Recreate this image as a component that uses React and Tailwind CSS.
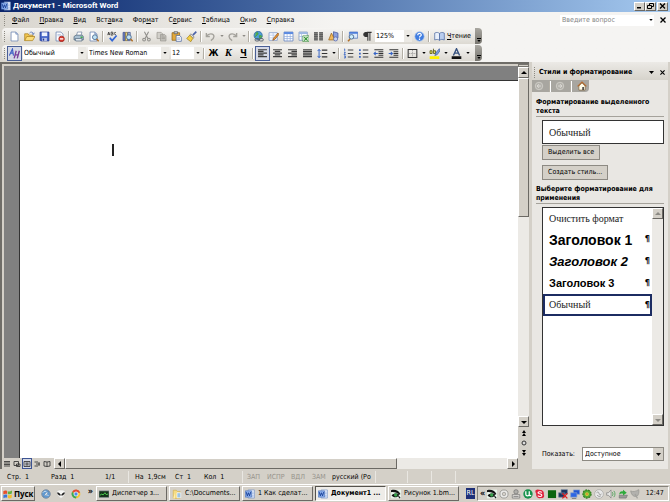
import React from "react";

/* ---------- shared drawing helpers ---------- */

function Svg({ children, className = "size-3" }) {
  return (
    <svg viewBox="0 0 16 16" className={"shrink-0 " + className} fill="none" aria-hidden="true">
      {children}
    </svg>
  );
}

function Down({ className = "w-[5px] h-[3px]" }) {
  return (
    <svg viewBox="0 0 5 3" className={"shrink-0 " + className} aria-hidden="true">
      <path d="M0 0h5L2.500 3z" fill="currentColor" />
    </svg>
  );
}

function Arrow({ dir, muted }) {
  const d = {
    up: "M1 5h6L4 2z",
    down: "M1 3h6L4 6z",
    left: "M5 1v6L2 4z",
    right: "M3 1v6l3-3z",
  }[dir];
  return (
    <svg viewBox="0 0 8 8" className="size-2 shrink-0" aria-hidden="true">
      <path d={d} fill={muted ? "#8c8a84" : "#000"} />
    </svg>
  );
}

/* ---------- toolbar icons ---------- */

const page = <path d="M3 1.500h7l3 3v10H3z" fill="#fff" stroke="#5a76a8" />;
const pageFold = <path d="M10 1.500v3h3" stroke="#5a76a8" fill="#cfdcf2" />;
const lens = (
  <>
    <circle cx="10" cy="9" r="3.500" fill="#bfe3f5" stroke="#4a6a92" strokeWidth="1.300" />
    <path d="M12.500 11.500l3 3.500" stroke="#b0702a" strokeWidth="2.200" />
  </>
);

const icons = {
  blank: <>{page}{pageFold}</>,
  open: (
    <>
      <path d="M1 14V4h5l1 2h6v3" fill="#f2c64e" stroke="#a87d1d" />
      <path d="M1 14l3-6h12l-3.500 6z" fill="#fbdc78" stroke="#a87d1d" />
      <path d="M8 3c2-2.500 5-1.500 5.500 1M15 2.500L13.700 5 11.500 3.800" stroke="#3a5fae" />
    </>
  ),
  save: (
    <>
      <path d="M1.500 1.500h13v13h-12l-1-1z" fill="#4464c8" stroke="#23358c" />
      <path d="M4 2h8v5.500H4z" fill="#eef3ff" />
      <path d="M4.500 10h7v4.500h-7z" fill="#b9c4e8" />
      <path d="M5.500 11h2v3h-2z" fill="#23358c" />
    </>
  ),
  permission: (
    <>
      {page}
      <path d="M5 5h5M5 7h6" stroke="#9fb2d6" />
      <circle cx="11" cy="11.500" r="4" fill="#d8372c" stroke="#9c1c14" />
      <path d="M8.500 11.500h5" stroke="#fff" strokeWidth="2" />
    </>
  ),
  print: (
    <>
      <path d="M5 7l1.500-5.500H13L11.500 7z" fill="#fff" stroke="#6c7f9c" />
      <path d="M1.500 8l3-2h9l1.500 2v5h-13.500z" fill="#a9c0d2" stroke="#4a6178" />
      <path d="M3 11h10v3.500H4z" fill="#e8eef2" stroke="#4a6178" />
      <path d="M11 9h3" stroke="#36a83c" strokeWidth="2" />
    </>
  ),
  preview: <>{page}{pageFold}{lens}</>,
  spell: (
    <>
      <path d="M1 6l1.500-4.500L4 6M1.500 4.500h2M6 1.500V6h1.500c2 0 2-2.500 0-2.500M6 1.500h1.500c1.500 0 1.500 2 0 2M13 2.500c-3-2-3.500 3.500 0 3" stroke="#1b1b1b" />
      <path d="M4 10l3.500 4L14 6.500" stroke="#3467d6" strokeWidth="2.400" />
    </>
  ),
  research: (
    <>
      <path d="M1.500 2h3v12h-3z" fill="#6e83c4" stroke="#3a4a84" />
      <path d="M5 2h3v12H5z" fill="#e8d27c" stroke="#7a6a30" />
      <path d="M8.500 2h3.500v12H8.500z" fill="#a5b6e0" stroke="#3a4a84" />
      {lens}
    </>
  ),
  cut: (
    <>
      <path d="M5 1l5 10M11 1L6 11" stroke="#8f8e8a" strokeWidth="1.500" />
      <circle cx="4.500" cy="12.500" r="2" stroke="#8f8e8a" strokeWidth="1.500" />
      <circle cx="11.500" cy="12.500" r="2" stroke="#8f8e8a" strokeWidth="1.500" />
    </>
  ),
  copy: (
    <>
      <path d="M1.500 2h6l2 2v7h-8z" fill="#d2d0ca" stroke="#97958f" />
      <path d="M6.500 5h6l2 2v7.500h-8z" fill="#c2c0ba" stroke="#97958f" />
      <path d="M8 9h5M8 11h5M8 7h3" stroke="#97958f" />
    </>
  ),
  paste: (
    <>
      <path d="M1.500 2.500h11v11h-11z" fill="#e3a93c" stroke="#8a5e14" />
      <path d="M4.500 1h5v3h-5z" fill="#c8ccd4" stroke="#555" />
      <path d="M7.500 6.500h5l2.500 2.500v6H7.500z" fill="#fff" stroke="#3f5d9c" />
      <path d="M9 10h4M9 12h4" stroke="#6f8fce" />
    </>
  ),
  brush: (
    <>
      <path d="M15 1l-5 5" stroke="#4a62a8" strokeWidth="2.400" />
      <path d="M7 4l5 5-2 1.500-4.500-4.500z" fill="#dfe3ea" stroke="#777" />
      <path d="M5.500 6L1 11l6 4.500 3-5z" fill="#f4cf45" stroke="#a07c16" />
    </>
  ),
  undo: <path d="M2 3v5h5M2.500 7.500C5 3 13 3 13 8c0 3-2 4.500-4.500 6" stroke="#a4a29c" strokeWidth="2" />,
  redo: <path d="M14 3v5H9M13.500 7.500C11 3 3 3 3 8c0 3 2 4.500 4.500 6" stroke="#a4a29c" strokeWidth="2" />,
  link: (
    <>
      <circle cx="7.500" cy="6.500" r="6" fill="#4d9ed8" stroke="#2a6296" />
      <path d="M4 3c3-2 4 0 3 2s-4 2-4 4M9 7c2-1 4 0 4 1l-3 3z" fill="#58b04a" stroke="#3f9440" />
      <rect x="3" y="11" width="6" height="3.500" rx="1.700" stroke="#56606e" strokeWidth="1.400" />
      <rect x="9" y="11" width="6" height="3.500" rx="1.700" stroke="#56606e" strokeWidth="1.400" />
    </>
  ),
  tablePen: (
    <>
      <path d="M1.500 2.500h12v11h-12z" fill="#fff" stroke="#6f8cc4" />
      <path d="M1.500 6h12M1.500 10h12M7.500 2.500v11" stroke="#a9bde4" />
      <path d="M14.500 3L8 10.500 7 13.500l3-1.500L16 5z" fill="#eb9a3a" stroke="#8a4c12" />
    </>
  ),
  table: (
    <>
      <path d="M1.500 1.500h13v13h-13z" fill="#fff" stroke="#4d72b8" />
      <path d="M1.500 1.500h13v3h-13z" fill="#5b8ae0" />
      <path d="M1.500 8h13M1.500 11h13M6 4v10.500M10.500 4v10.500" stroke="#8fabdd" />
    </>
  ),
  excel: (
    <>
      <path d="M1.500 1.500h12v12h-12z" fill="#fff" stroke="#6a86b8" />
      <path d="M1.500 1.500h12v3h-12z" fill="#9db8e2" />
      <path d="M1.500 8h6M5 4v9" stroke="#9db8e2" />
      <path d="M7 7h9v8.500H7z" fill="#eaf6e8" stroke="#3d8a3d" />
      <path d="M9 9l5 5M14 9l-5 5" stroke="#2f9132" strokeWidth="1.700" />
    </>
  ),
  columns: (
    <>
      <path d="M1.500 2h5.500v12H1.500zM9 2h5.500v12H9z" fill="#8c8c8a" />
      <path d="M1.500 2.500h5.500M1.500 5.500h5.500M1.500 8.500h5.500M1.500 11.500h5.500M9 2.500h5.500M9 5.500h5.500M9 8.500h5.500M9 11.500h5.500" stroke="#4d4d4d" strokeWidth="1.500" />
    </>
  ),
  drawing: (
    <>
      <path d="M8 1l6.500 2v7L8 12z" fill="#8c9fdc" stroke="#3c4f96" />
      <path d="M1 13L5 3l5 10z" fill="#f2b95a" stroke="#96621a" />
      <circle cx="11" cy="11.500" r="3" fill="#c8d2f0" stroke="#4a5ea8" />
    </>
  ),
  docmap: (
    <>
      <path d="M3.500 1.500h12v9h-12z" fill="#dceafa" stroke="#3f68b4" />
      <path d="M3.500 1.500h12v2.500h-12z" fill="#4a7ad8" />
      <circle cx="6.500" cy="8.500" r="3.300" fill="#cdeefb" stroke="#4a6a92" strokeWidth="1.300" />
      <path d="M4.500 11.500l-3 3.500" stroke="#b0702a" strokeWidth="2.200" />
    </>
  ),
  pilcrow: <path d="M7 2h7M8.500 2v12M11.500 2v12M7.500 2C1 2 1 8 7.500 8z" stroke="#333" strokeWidth="1.500" fill="#333" />,
  help: (
    <>
      <circle cx="8" cy="8" r="6.800" fill="#3f7ce0" stroke="#a9c4ec" />
      <path d="M5.500 6c0-3.500 5.500-3 5 0-.3 1.500-2.500 1.500-2.500 3.500M8 11v2" stroke="#fff" strokeWidth="1.800" />
    </>
  ),
  book: (
    <>
      <path d="M1 3c3-1.500 5-1 7 .5v10C6 12 4 12 1 13z" fill="#e9f0fb" stroke="#45629c" />
      <path d="M15 3c-3-1.500-5-1-7 .5v10c2-1.500 4-1.500 7-.5z" fill="#b9cdee" stroke="#45629c" />
    </>
  ),
  styles: (
    <>
      <path d="M.500 11L5 1.500 6.500 11M2.500 7.500h4" stroke="#3f5fc4" strokeWidth="1.700" />
      <path d="M7.500 15L10.500 4M12 15l3-11M8.500 10h5" stroke="#7a3f9a" strokeWidth="2" />
    </>
  ),
  left: <path d="M1.500 2.500h13M1.500 5h8M1.500 7.500h13M1.500 10h8M1.500 12.500h13" stroke="#3c3c3c" strokeWidth="1.700" />,
  center: <path d="M1.500 2.500h13M4 5h8M1.500 7.500h13M4 10h8M1.500 12.500h13" stroke="#3c3c3c" strokeWidth="1.700" />,
  right: <path d="M1.500 2.500h13M6.500 5h8M1.500 7.500h13M6.500 10h8M1.500 12.500h13" stroke="#3c3c3c" strokeWidth="1.700" />,
  justify: <path d="M1.500 2.500h13M1.500 5h13M1.500 7.500h13M1.500 10h13M1.500 12.500h13" stroke="#3c3c3c" strokeWidth="1.700" />,
  spacing: (
    <>
      <path d="M7 3h8M7 8h8M7 13h8" stroke="#333" strokeWidth="1.700" />
      <path d="M3 2v12M.800 4.500L3 2l2.200 2.500M.800 11.500L3 14l2.200-2.500" stroke="#3563c4" strokeWidth="1.400" />
    </>
  ),
  numbers: (
    <>
      <path d="M7 3h8M7 8h8M7 13h8" stroke="#444" strokeWidth="1.500" />
      <path d="M1.500 2l1-.7V5M1.500 6.500h2L1.500 9.500h2.500M1.500 11.500h2v3h-2M2 13h1.500" stroke="#3563c4" strokeWidth="1.200" />
    </>
  ),
  bullets: (
    <>
      <path d="M7 3h8M7 8h8M7 13h8" stroke="#444" strokeWidth="1.500" />
      <path d="M1.500 1.800h2.500v2.500H1.500zM1.500 6.800h2.500v2.500H1.500zM1.500 11.800h2.500v2.500H1.500z" fill="#3563c4" />
    </>
  ),
  outdent: (
    <>
      <path d="M2 2.500h13M8 5.500h7M8 8h7M8 10.500h7M2 13.500h13" stroke="#333" strokeWidth="1.700" />
      <path d="M7 8H1.500M4 5.500L1.500 8 4 10.500" stroke="#3563c4" strokeWidth="1.500" />
    </>
  ),
  indent: (
    <>
      <path d="M2 2.500h13M8 5.500h7M8 8h7M8 10.500h7M2 13.500h13" stroke="#333" strokeWidth="1.700" />
      <path d="M1 8h5.500M4 5.500L6.500 8 4 10.500" stroke="#3563c4" strokeWidth="1.500" />
    </>
  ),
  borders: (
    <>
      <path d="M1.700 2.200h12.600v11.600H1.700z" stroke="#333" strokeWidth="1.500" />
      <path d="M8 3v10M3 8h10" stroke="#888" strokeDasharray="1.500 1" />
    </>
  ),
  highlight: (
    <>
      <path d="M1 12h14v4H1z" fill="#fff200" />
      <path d="M1.500 4h3v4h-3zM6.500 1v7h3V4h-3" stroke="#5a5a14" strokeWidth="1.200" fill="#e8e060" />
      <path d="M15 1l-5 6-1.500 4L12 9.500 16 4z" fill="#7da0dc" stroke="#3c5894" />
    </>
  ),
  fontColor: (
    <>
      <path d="M3.500 11L8 1l4.500 10M5 7.500h6" stroke="#35507e" strokeWidth="2" />
      <path d="M1 12h14v4H1z" fill="#111" />
    </>
  ),
  word: (
    <>
      <path d="M5 1.500h10v13H5z" fill="#f4f8ff" stroke="#6c8ac0" />
      <path d="M11 5h3M11 7.500h3M11 10h3M11 12.500h3" stroke="#7c9cd8" />
      <path d="M.500 3h10v10H.500z" fill="#8fb2ee" stroke="#3f68b4" />
      <path d="M2 5l1.700 6 1.800-5L7.300 11 9 5" stroke="#173f96" strokeWidth="1.500" />
    </>
  ),
  home: (
    <>
      <path d="M3 8v6.500h10V8L8 3z" fill="#fffbe8" stroke="#7a5c30" />
      <path d="M1 8.500L8 1.500l7 7" stroke="#b4682a" strokeWidth="1.800" />
      <path d="M8.500 9.500h2.500v5H8.500z" fill="#3c3c3c" />
    </>
  ),
  back: (
    <>
      <circle cx="8" cy="8" r="6" fill="#b4b2ac" stroke="#dddbd6" />
      <path d="M11 8H5M8 5L5 8l3 3" stroke="#dddbd6" strokeWidth="1.600" />
    </>
  ),
  forward: (
    <>
      <circle cx="8" cy="8" r="6" fill="#b4b2ac" stroke="#dddbd6" />
      <path d="M5 8h6M8 5l3 3-3 3" stroke="#dddbd6" strokeWidth="1.600" />
    </>
  ),
  windows: (
    <g transform="rotate(-6 8 8)">
      <path d="M1 3c2.500-1.500 4-1 6 0l-.5 5c-2-1-3.500-1-6 0z" fill="#e8502c" />
      <path d="M8 3.500c2 1 4 1 7-.5l-.8 5c-2.500 1-4.500 1-6.500 0z" fill="#62b13c" />
      <path d="M.500 9c2.500-1 4-1 6 0L6 14c-2-1-4-1-6 0z" fill="#3b74d8" />
      <path d="M7.500 9.500c2 1 4 1 6.500 0l-.8 5c-2.500 1-4 1-6 0z" fill="#f5c02e" />
    </g>
  ),
  globe: (
    <>
      <circle cx="8" cy="8" r="6.800" fill="#5f9ad4" stroke="#7e8c9c" strokeWidth="1.500" />
      <path d="M3 6c2-3 5-3 6-1s-3 2-2 4 4-1 5 2" stroke="#cfe2f4" strokeWidth="1.400" />
      <path d="M12 4L7 7l-2.500 5L9.500 9z" fill="#f1f6fb" stroke="#46688c" strokeWidth=".700" />
    </>
  ),
  alien: (
    <>
      <path d="M1.500 3C3 2 5 1.500 8 1.500s5 .5 6.500 1.500c1 4-3 11-6.500 12C4.500 14 .500 7 1.500 3z" fill="#f6f6f4" stroke="#c8c6c0" />
      <path d="M2.500 6c2 0 4 1.500 4.500 4C4.500 10 3 8.500 2.500 6zM13.500 6c-2 0-4 1.500-4.500 4 2.500 0 4-1.500 4.500-4z" fill="#161616" stroke="#161616" />
    </>
  ),
  chrome: (
    <>
      <circle cx="8" cy="8" r="7" fill="#f6c634" />
      <path d="M8 8L1.900 4.500A7 7 0 0114.800 6H8z" fill="#df4a37" />
      <path d="M1.900 4.500A7 7 0 007.500 15L10.500 9.500 6 9z" fill="#3aa757" />
      <circle cx="8" cy="8" r="3.300" fill="#4a8af0" stroke="#fff" strokeWidth="1.200" />
    </>
  ),
  taskman: (
    <>
      <path d="M0 3h16v10.500H0z" fill="#14341a" stroke="#8a9098" />
      <path d="M1.500 10l3-2 2 1.500 3-3.500 2 3 3-1" stroke="#53dd55" strokeWidth="1.400" />
    </>
  ),
  folder: (
    <>
      <path d="M2 2h5l1.500 2H13v11H2z" fill="#f5dc83" stroke="#d0ad4c" />
      <path d="M8 6h6v8H8z" fill="#9cc4e4" stroke="#fff" />
      <path d="M2 15L4.500 6v9z" fill="#fff2ba" />
    </>
  ),
  irfan: (
    <>
      <path d="M0 1h16v14H0z" fill="#e8f4ea" />
      <path d="M0 2c6-2 12 0 15 6l-1.500 1C10.500 6 6 4.500 0 5zM1 10c3-3 9-4 12-1-2 5-9 6-12 1z" fill="#111" />
      <circle cx="7.500" cy="9.500" r="2.800" fill="#36a04a" />
      <path d="M12 11.500l2.500 3" stroke="#111" strokeWidth="1.800" />
    </>
  ),
  disc: (
    <>
      <circle cx="8" cy="8" r="6.500" fill="#ececea" stroke="#9c9c98" strokeWidth="1.500" />
      <circle cx="8" cy="8" r="2.800" fill="#d4d0c8" stroke="#8c8c88" />
    </>
  ),
  device: (
    <>
      <circle cx="8" cy="4.500" r="3.500" fill="#b0afab" stroke="#666" />
      <path d="M2 9h12v5.500H2z" fill="#dcdad6" stroke="#666" />
      <path d="M4 12h8" stroke="#666" />
    </>
  ),
  utorrent: (
    <>
      <circle cx="8" cy="8" r="7.500" fill="#17924c" />
      <path d="M4.500 3.500v5c0 3.500 5.500 3.500 5.500 0v-5V9c0 2 1.500 2 3 1" stroke="#fff" strokeWidth="2" />
    </>
  ),
  skype: (
    <>
      <path d="M1 2c3-2 5-.5 8-.5 4 0 6 4 5 7 2 4-1 7-4 6-5 1-9-2-8-7-1-1.500-2-4-1-5.500z" fill="#e0223c" />
      <path d="M11 5.500c-2-2-6.500-1-6 1 .5 1.500 6 1 6 3.500s-5 2.500-6.500.5" stroke="#fff" strokeWidth="1.700" />
    </>
  ),
  square: <path d="M1.500 2h13v12.500h-13z" fill="#0b650f" />,
  netOff: (
    <>
      <path d="M5 1h10v7H5zM1 6h10v7H1z" fill="#19345e" stroke="#6d7f98" />
      <path d="M7 7l8 8M15 7l-8 8" stroke="#e21f1f" strokeWidth="2.200" />
    </>
  ),
  net: (
    <>
      <path d="M5.500 1.500h10v7h-10z" fill="#2257d2" stroke="#8ba3cc" />
      <path d="M1 6h10v7H1z" fill="#2d66e4" stroke="#8ba3cc" />
      <path d="M3 15h7" stroke="#777" strokeWidth="1.500" />
    </>
  ),
  flower: (
    <>
      <circle cx="8" cy="8" r="6.500" fill="#52a836" stroke="#357f22" strokeWidth="2" strokeDasharray="3 1.500" />
      <circle cx="8" cy="8" r="3" fill="#d2d83c" />
      <circle cx="8" cy="8" r="1.300" fill="#d8542c" />
    </>
  ),
  grayDisc: (
    <>
      <circle cx="8" cy="8" r="7" fill="#e8e8e8" stroke="#a2a2a0" />
      <path d="M4 6c2-2 4-1 4 1s2 3 4 1M5 10l3 2 3-1" stroke="#8e8e8c" strokeWidth="1.300" />
    </>
  ),
  speaker: (
    <>
      <path d="M1 6h3l4-4.500v13L4 10H1z" fill="#e8e8e6" stroke="#777" />
      <path d="M10 5c1.500 2 1.500 4 0 6M12.500 3c2.500 3 2.500 7 0 10" stroke="#4fa35a" strokeWidth="1.400" />
    </>
  ),
  eject: (
    <>
      <path d="M2 10h13l-2 4.500H2z" fill="#9a9a98" stroke="#70706e" />
      <path d="M2 9c0-4 3-6 6-5V1l6 5-6 4.500V7.500C6 7 4 7 2 9z" fill="#2faa3c" />
    </>
  ),
  shield: (
    <>
      <path d="M1 3c4 2 8 1 13-2 1 6-1 11-5 11S2 9 1 3z" fill="#b2b1ad" stroke="#90908c" />
      <path d="M8 8l4 7" stroke="#a2a19d" strokeWidth="2" />
    </>
  ),
};

function Icon({ name, className }) {
  return <Svg className={className}>{icons[name]}</Svg>;
}

/* ---------- controls ---------- */

function Tool({ name, label, active, children }) {
  return (
    <button
      type="button"
      aria-label={label}
      aria-pressed={active}
      className={
        "flex h-[15px] w-[15px] shrink-0 items-center justify-center " +
        (active ? "border border-[#4a5f96] bg-[#d5d9e6]" : "")
      }
    >
      {name ? <Icon name={name} className="size-[11px]" /> : children}
    </button>
  );
}

function More({ label, muted }) {
  return (
    <button
      type="button"
      aria-label={label}
      className={"flex h-[15px] w-[7px] shrink-0 items-center justify-center " + (muted ? "text-[#8c8a84]" : "text-black")}
    >
      <Down className="h-[2px] w-1" />
    </button>
  );
}

function Sep() {
  return <span className="mx-px h-[11px] w-[2px] shrink-0 border-l border-[#b3afa5] bg-white" />;
}

function Grip() {
  return <span className="mx-[2px] h-[11px] w-px shrink-0 border-l border-dotted border-[#8d8a82]" />;
}

function Combo({ label, value, options, className }) {
  return (
    <div className={"relative flex h-3 shrink-0 items-center bg-white " + className}>
      <select
        aria-label={label}
        defaultValue={value}
        className="block h-3 w-full appearance-none overflow-hidden bg-transparent pl-px text-[7px] leading-3"
      >
        {options.map((o) => (
          <option key={o}>{o}</option>
        ))}
      </select>
      <span className="pointer-events-none absolute inset-y-0 right-0 flex w-2 items-center justify-center bg-[#ebe9e4]">
        <Down className="h-[2px] w-1" />
      </span>
    </div>
  );
}

function ToolbarEnd() {
  return (
    <button
      type="button"
      aria-label="Параметры панелей инструментов"
      className="flex h-4 w-[7px] shrink-0 flex-col items-center justify-end gap-px rounded-r-sm bg-gradient-to-b from-[#a9a7a1] to-[#77756f] pb-[2px]"
    >
      <span className="h-px w-1 bg-black" />
      <Down className="h-[2px] w-1" />
    </button>
  );
}

const raised = "border border-t-white border-l-white border-r-[#6b6964] border-b-[#6b6964] bg-[#d4d0c8]";

function ScrollButton({ dir, label, muted }) {
  return (
    <button type="button" aria-label={label} className={"flex size-[11px] shrink-0 items-center justify-center " + raised}>
      <Arrow dir={dir} muted={muted} />
    </button>
  );
}

/* ---------- window regions ---------- */

function TitleBar() {
  const glyph = "flex h-[9px] w-[11px] items-center justify-center " + raised;
  return (
    <header className="flex h-3 items-center gap-[2px] bg-gradient-to-r from-[#0a246a] to-[#a6caf0] pr-[2px] pl-px">
      <Icon name="word" className="size-[10px]" />
      <h1 className="grow font-['Roboto',sans-serif] text-[8px] leading-3 font-bold text-white">Документ1 - Microsoft Word</h1>
      <div className="flex">
        <button type="button" aria-label="Свернуть" className={glyph}>
          <svg viewBox="0 0 7 6" className="h-[6px] w-[7px]"><path d="M1 4h4v1.500H1z" /></svg>
        </button>
        <button type="button" aria-label="Восстановить" className={glyph}>
          <svg viewBox="0 0 7 6" className="h-[6px] w-[7px]" fill="none" stroke="#000"><path d="M2.500 2V.500h4v3H5M.500 2.500h4v3h-4z" /></svg>
        </button>
        <button type="button" aria-label="Закрыть" className={"ml-px " + glyph}>
          <svg viewBox="0 0 7 6" className="h-[6px] w-[7px]" stroke="#000" strokeWidth="1.300"><path d="M1 .500l5 5M6 .500l-5 5" /></svg>
        </button>
      </div>
    </header>
  );
}

const menus = [
  ["", "Ф", "айл"],
  ["", "П", "равка"],
  ["", "В", "ид"],
  ["Вст", "а", "вка"],
  ["Фор", "м", "ат"],
  ["С", "е", "рвис"],
  ["", "Т", "аблица"],
  ["", "О", "кно"],
  ["", "С", "правка"],
];

function MenuBar() {
  return (
    <nav className="flex h-4 items-center pr-[3px] pl-[2px]">
      <Grip />
      <ul className="flex grow items-center gap-[10px] pl-[5px] text-[7px] leading-4">
        {menus.map(([a, u, b]) => (
          <li key={a + u + b}>
            <button type="button">
              {a}
              <span className="underline">{u}</span>
              {b}
            </button>
          </li>
        ))}
      </ul>
      <div className="flex h-[11px] w-[94px] items-center bg-white text-[7px]">
        <input
          aria-label="Введите вопрос"
          placeholder="Введите вопрос"
          className="h-[11px] w-full min-w-0 pl-[2px] outline-none placeholder:text-[#858585]"
        />
        <More label="Последние вопросы" />
      </div>
      <button type="button" aria-label="Закрыть документ" className="ml-[5px] flex w-2 justify-center">
        <svg viewBox="0 0 6 6" className="size-[6px]" stroke="#000" strokeWidth="1.300"><path d="M.500 .500l5 5M5.500 .500l-5 5" /></svg>
      </button>
    </nav>
  );
}

const bar = "flex h-4 w-[480px] items-center rounded-sm bg-gradient-to-b from-[#f6f5f3] to-[#dcd9d2]";

function StandardBar() {
  return (
    <div role="toolbar" aria-label="Стандартная" className={bar}>
      <Grip />
      <Tool name="blank" label="Создать" />
      <Tool name="open" label="Открыть" />
      <Tool name="save" label="Сохранить" />
      <Tool name="permission" label="Разрешения" />
      <Sep />
      <Tool name="print" label="Печать" />
      <Tool name="preview" label="Предварительный просмотр" />
      <Sep />
      <Tool name="spell" label="Правописание" />
      <Tool name="research" label="Справочные материалы" />
      <Sep />
      <Tool name="cut" label="Вырезать" />
      <Tool name="copy" label="Копировать" />
      <Tool name="paste" label="Вставить" />
      <Tool name="brush" label="Формат по образцу" />
      <Sep />
      <Tool name="undo" label="Отменить" />
      <More label="Список отмены" muted />
      <Tool name="redo" label="Вернуть" />
      <More label="Список возврата" muted />
      <Sep />
      <Tool name="link" label="Гиперссылка" />
      <Tool name="tablePen" label="Таблицы и границы" />
      <Tool name="table" label="Добавить таблицу" />
      <Tool name="excel" label="Лист Excel" />
      <Tool name="columns" label="Колонки" />
      <Tool name="drawing" label="Рисование" />
      <Sep />
      <Tool name="docmap" label="Схема документа" />
      <Tool name="pilcrow" label="Непечатаемые знаки" />
      <Combo label="Масштаб" value="125%" options={["100%", "125%", "150%"]} className="w-[37px]" />
      <Tool name="help" label="Справка" />
      <Sep />
      <button type="button" className="flex h-[15px] grow items-center gap-[2px] pl-[3px] text-[7px]">
        <Icon name="book" className="size-[11px]" />
        <span><span className="underline">Ч</span>тение</span>
      </button>
      <ToolbarEnd />
    </div>
  );
}

function FormatBar() {
  return (
    <div role="toolbar" aria-label="Форматирование" className={bar}>
      <Grip />
      <Tool name="styles" label="Стили и форматирование" active />
      <div className="flex shrink-0 gap-[2px] pl-px">
        <Combo label="Стиль" value="Обычный" options={["Обычный", "Заголовок 1", "Заголовок 2"]} className="w-[63px]" />
        <Combo label="Шрифт" value="Times New Roman" options={["Times New Roman", "Arial"]} className="w-[81px]" />
        <Combo label="Размер" value="12" options={["10", "12", "14"]} className="w-[31px]" />
      </div>
      <Sep />
      <Tool label="Полужирный"><b className="text-[9px] leading-none">Ж</b></Tool>
      <Tool label="Курсив"><b className="font-['Liberation_Serif',serif] text-[10px] leading-none italic">К</b></Tool>
      <Tool label="Подчеркнутый"><b className="text-[9px] leading-none underline">Ч</b></Tool>
      <Sep />
      <Tool name="left" label="По левому краю" active />
      <Tool name="center" label="По центру" />
      <Tool name="right" label="По правому краю" />
      <Tool name="justify" label="По ширине" />
      <Tool name="spacing" label="Междустрочный интервал" />
      <More label="Варианты интервала" />
      <Sep />
      <Tool name="numbers" label="Нумерация" />
      <Tool name="bullets" label="Маркеры" />
      <Tool name="outdent" label="Уменьшить отступ" />
      <Tool name="indent" label="Увеличить отступ" />
      <Sep />
      <Tool name="borders" label="Границы" />
      <More label="Варианты границ" />
      <Tool name="highlight" label="Выделение цветом" />
      <More label="Цвет выделения" />
      <Tool name="fontColor" label="Цвет шрифта" />
      <More label="Другие цвета" />
      <span className="grow" />
      <ToolbarEnd />
    </div>
  );
}

const views = [
  ["Обычный", "M2 3h12M2 6h12M2 9h12M2 12h12"],
  ["Веб-документ", "M2 3h9v8H2zM7 8h7v5H7z"],
  ["Разметка страницы", "M2 3h12v10H2zM5 6h6M5 8h6M5 10h6"],
  ["Структура", "M3 4h7M6 8h8M3 12h7M12 4v8"],
  ["Чтение", "M2 3l6 1 6-1v9l-6 1-6-1zM8 4v9"],
];

function Document() {
  return (
    <main className="flex min-w-0 grow flex-col border-t-2 border-l-2 border-[#6f6d68] bg-[#d4d0c8]">
      <div className="flex min-h-0 grow">
        <div className="flex min-w-0 grow border-t-2 border-l-2 border-[#d4d0c8] bg-[#808080] pt-[14px] pl-[15px]">
          <div
            role="textbox"
            aria-label="Документ"
            aria-multiline="true"
            className="grow border-t border-l border-[#333] bg-white pt-[63px] pl-[92px]"
          >
            <span className="block h-3 w-[2px] bg-[#222]" />
          </div>
        </div>
        <div className="flex w-[11px] shrink-0 flex-col bg-[#eceae6]">
          <span className="h-[3px] shrink-0 border border-[#77756f] bg-[#d4d0c8]" />
          <ScrollButton dir="up" label="Вверх" />
          <span className={"h-[139px] shrink-0 " + raised} />
          <span className="grow" />
          <ScrollButton dir="down" label="Вниз" />
          <div className="flex h-[31px] shrink-0 flex-col items-center justify-around bg-[#d4d0c8]">
            <button type="button" aria-label="Предыдущая страница">
              <svg viewBox="0 0 6 8" className="h-2 w-[6px]"><path d="M1 4h4L3 1zM1 7h4L3 4z" /></svg>
            </button>
            <button type="button" aria-label="Выбор объекта перехода">
              <svg viewBox="0 0 6 6" className="size-[6px]"><circle cx="3" cy="3" r="2" fill="#ddd" stroke="#333" /></svg>
            </button>
            <button type="button" aria-label="Следующая страница">
              <svg viewBox="0 0 6 8" className="h-2 w-[6px]"><path d="M1 1h4L3 4zM1 4h4L3 7z" /></svg>
            </button>
          </div>
        </div>
      </div>
      <div className="flex h-[11px] shrink-0">
        <div className="flex w-[52px] shrink-0">
          {views.map(([label, d], i) => (
            <button
              key={label}
              type="button"
              aria-label={label}
              className={"flex h-[11px] w-[10px] items-center justify-center " + (i === 2 ? "border border-[#3d5492] bg-[#d5d9e6]" : "")}
            >
              <Svg className="size-2"><path d={d} stroke="#333" strokeWidth="1.700" /></Svg>
            </button>
          ))}
        </div>
        <ScrollButton dir="left" label="Влево" />
        <div className="flex grow bg-[#eceae6]">
          <span className={"w-3/4 " + raised} />
        </div>
        <ScrollButton dir="right" label="Вправо" />
        <span className="w-[11px] shrink-0" />
      </div>
    </main>
  );
}

const styles = [
  ["Очистить формат", "font-['Liberation_Serif',serif] text-[10px] text-[#222]", false],
  ["Заголовок 1", "font-['Liberation_Sans',sans-serif] text-[14px] font-bold", true],
  ["Заголовок 2", "font-['Liberation_Sans',sans-serif] text-[13px] font-bold italic", true],
  ["Заголовок 3", "font-['Liberation_Sans',sans-serif] text-[11px] font-bold", true],
  ["Обычный", "font-['Liberation_Serif',serif] text-[10px] text-[#222]", true],
];

function SectionTitle({ children }) {
  return <h3 className="border-b border-[#a5a29b] text-[7px] leading-[9px] font-bold">{children}</h3>;
}

const panelButton = "h-[15px] border border-[#8d8a83] bg-[#d4d0c8] px-[5px] text-[7px] leading-none";

function TaskPane() {
  return (
    <aside className="mr-[2px] flex w-[136px] shrink-0 flex-col bg-[#e9e7e3]">
      <div className="flex h-[18px] items-center bg-gradient-to-b from-[#eceae6] to-[#d6d3cb] pt-[2px] pr-px">
        <Grip />
        <h2 className="grow pl-[2px] text-[7px] font-bold">Стили и форматирование</h2>
        <button type="button" aria-label="Другие области задач" className="flex w-3 justify-center"><Down className="h-[3px] w-[5px]" /></button>
        <button type="button" aria-label="Закрыть область" className="flex w-[10px] justify-center">
          <svg viewBox="0 0 6 6" className="size-[5px]" stroke="#000" strokeWidth="1.300"><path d="M.500 .500l5 5M5.500 .500l-5 5" /></svg>
        </button>
      </div>
      <div className="flex h-3 w-[57px] items-center justify-around rounded-br-sm bg-[#a8a6a0]">
        <button type="button" aria-label="Назад"><Icon name="back" className="size-[10px]" /></button>
        <Sep />
        <button type="button" aria-label="Вперед"><Icon name="forward" className="size-[10px]" /></button>
        <Sep />
        <button type="button" aria-label="Домой"><Icon name="home" className="size-[10px]" /></button>
      </div>
      <div className="flex min-h-0 grow flex-col pt-[6px] pr-1 pb-2 pl-1">
        <SectionTitle>Форматирование выделенного текста</SectionTitle>
        <div className="mt-[3px] ml-[6px] flex h-6 shrink-0 items-center border border-[#333] bg-white pl-[6px] font-['Liberation_Serif',serif] text-[10px] text-[#222]">
          Обычный
        </div>
        <div className="mt-px mb-[5px] ml-[6px] flex flex-col items-start gap-[5px]">
          <button type="button" className={panelButton}>Выделить все</button>
          <button type="button" className={panelButton}>Создать стиль...</button>
        </div>
        <SectionTitle>Выберите форматирование для применения</SectionTitle>
        <div className="mt-[3px] ml-[6px] flex min-h-0 grow border border-[#333] bg-white">
          <ul className="grow">
            {styles.map(([name, face, mark], i) => (
              <li
                key={name}
                className={
                  "flex items-center justify-between border-2 pl-1 leading-none " +
                  (i < 2 ? "h-[21px] " : "h-[22px] ") +
                  (i === 4 ? "border-[#1c2c62]" : "border-transparent")
                }
              >
                <span className={"whitespace-nowrap " + face}>{name}</span>
                {mark && <span className="text-[9px] font-bold">¶</span>}
              </li>
            ))}
          </ul>
          <div className="flex w-[11px] shrink-0 flex-col justify-between bg-[#eceae6]">
            <ScrollButton dir="up" label="Список вверх" muted />
            <ScrollButton dir="down" label="Список вниз" muted />
          </div>
        </div>
        <div className="mt-[21px] flex h-[14px] shrink-0 items-center justify-between pl-[6px] text-[7px]">
          <label htmlFor="show">Показать:</label>
          <div className="relative w-[82px]">
            <select id="show" className="block h-[14px] w-full appearance-none border border-[#8d8a83] bg-white pl-[2px] text-[7px]">
              <option>Доступное</option>
              <option>Все стили</option>
            </select>
            <span className="pointer-events-none absolute top-px right-px flex h-3 w-[10px] items-center justify-center bg-[#d4d0c8]">
              <Down className="h-[3px] w-[5px]" />
            </span>
          </div>
        </div>
      </div>
    </aside>
  );
}

function StatusBar() {
  const cell = "flex h-3 items-center border-r border-[#e9e7e2]";
  return (
    <footer className="flex h-[15px] shrink-0 items-center gap-[2px] bg-[#d4d0c8] px-1 pt-px text-[7px]">
      <div className={cell + " w-[125px] pl-[3px]"}>
        <span className="w-11">Стр.&nbsp; 1</span>
        <span className="w-[54px]">Разд&nbsp; 1</span>
        <span>1/1</span>
      </div>
      <div className={cell + " w-[112px] pl-1"}>
        <span className="w-10">На&nbsp; 1,9см</span>
        <span className="w-[29px]">Ст&nbsp; 1</span>
        <span>Кол&nbsp; 1</span>
      </div>
      <div className={cell + " w-[131px] pl-[2px] text-[#96938c]"}>
        <span className="w-[20px]">ЗАП</span>
        <span className="w-6">ИСПР</span>
        <span className="w-[21px]">ВДЛ</span>
        <span className="w-5">ЗАМ</span>
        <span className="text-black">русский (Ро</span>
      </div>
      <div className={cell + " w-[30px]"} />
      <div className={cell + " w-[22px]"} />
      <div className={cell + " w-[22px]"} />
    </footer>
  );
}

const tasks = [
  ["taskman", "Диспетчер з..."],
  ["folder", "C:\\Documents..."],
  ["word", "1 Как сделат..."],
  ["word", "Документ1 ..."],
  ["irfan", "Рисунок 1.bm..."],
];

const tray = ["irfan", "disc", "device", "utorrent", "skype", "square", "netOff", "net", "flower", "grayDisc", "speaker", "eject", "shield"];

function Taskbar() {
  return (
    <div className="flex h-[18px] shrink-0 items-center border-t border-white bg-[#d4d0c8] px-px text-[7px]">
      <button type="button" className={"flex h-[15px] w-[34px] shrink-0 items-center gap-px pl-px font-['Noto_Sans',sans-serif] text-[8px] font-bold " + raised}>
        <Icon name="windows" className="size-[10px]" />
        Пуск
      </button>
      <div className="flex w-[61px] shrink-0 items-center justify-end gap-[5px] pr-[3px]">
        <Icon name="globe" className="size-[10px]" />
        <Icon name="alien" className="size-[10px]" />
        <Icon name="chrome" className="size-[10px]" />
        <span className="pb-1 pl-[2px] text-[9px] leading-none font-bold">»</span>
      </div>
      <div className="flex min-w-0 grow gap-[2px]">
        {tasks.map(([icon, name], i) => (
          <button
            key={name}
            type="button"
            className={
              "flex h-[15px] min-w-0 flex-1 items-center gap-[3px] overflow-hidden pl-[2px] whitespace-nowrap " +
              (i === 3 ? "border border-t-[#55534e] border-r-white border-b-white border-l-[#55534e] bg-[#eeece8] font-bold" : raised)
            }
          >
            <Icon name={icon} className="size-[10px]" />
            {name}
          </button>
        ))}
      </div>
      <span className="mr-[2px] ml-[7px] flex h-[11px] w-[9px] shrink-0 items-center justify-center bg-[#1d2f78] text-white">RL</span>
      <div className="flex h-[15px] w-[192px] shrink-0 items-center justify-between border border-t-[#85827b] border-r-white border-b-white border-l-[#85827b] pr-1 pl-[2px]">
        <span className="text-[9px] leading-none font-bold">«</span>
        {tray.map((t) => (
          <Icon key={t} name={t} className="size-[10px]" />
        ))}
        <time className="pl-1">12:47</time>
      </div>
    </div>
  );
}

export default function App() {
  return (
    <div className="flex h-screen flex-col overflow-hidden bg-[#d4d0c8] font-['DejaVu_Sans_Condensed','DejaVu_Sans',sans-serif] text-black">
      <TitleBar />
      <div className="bg-gradient-to-r from-[#d9d6cf] to-[#f5f4f2] to-50%">
        <MenuBar />
        <div className="flex flex-col gap-px pb-px pl-[2px]">
          <StandardBar />
          <FormatBar />
        </div>
      </div>
      <div className="flex min-h-0 grow gap-[3px]">
        <Document />
        <TaskPane />
      </div>
      <StatusBar />
      <Taskbar />
    </div>
  );
}
